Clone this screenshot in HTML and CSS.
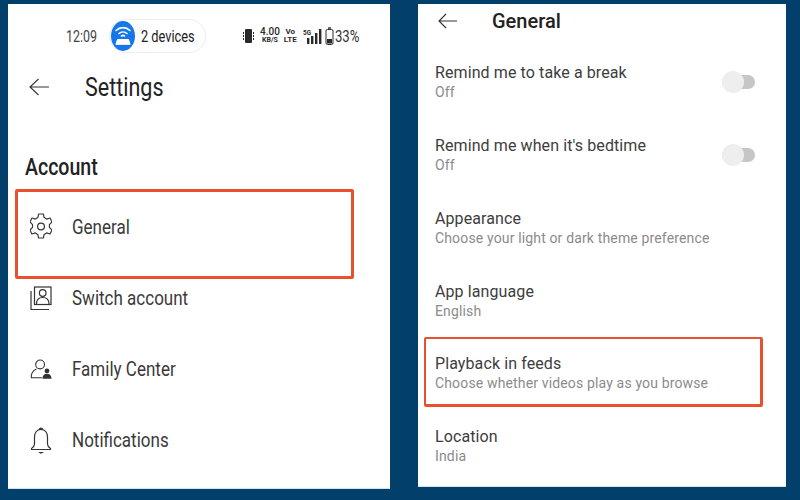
FILE: index.html
```html
<!DOCTYPE html>
<html lang="en">
<head>
    <meta charset="UTF-8">
    <title>YouTube playback settings</title>
    <link rel="stylesheet" href="styles.css">
</head>
<body>
    <div class="panel panel-left">
        <div class="status">
            <span class="clock">12:09</span>
            <div class="pill">
                <span class="pill-icon">
                    <svg width="24" height="30" viewBox="0 0 24 30" fill="none" stroke="#fff" stroke-linecap="round">
                        <path d="M5 9.5a10 10 0 0 1 14 0" stroke-width="1.6"/>
                        <path d="M8 12.5a6 6 0 0 1 8 0" stroke-width="1.6"/>
                        <path d="M10.5 15a2.5 2.5 0 0 1 3 0" stroke-width="1.6"/>
                        <path d="M5 23l1.5-4.5h11L19 23z" fill="#fff" stroke-width="1"/>
                    </svg>
                </span>
                <span class="pill-text">2 devices</span>
            </div>
            <div class="indicators">
                <svg width="13" height="16" viewBox="0 0 13 16" fill="#2a2a2a">
                    <rect x="3" y="1" width="7" height="14" rx="1"/>
                    <path d="M1.5 4v8M11.5 4v8" stroke="#2a2a2a" stroke-dasharray="2 1"/>
                </svg>
                <span class="speed"><b>4.00</b><small>KB/S</small></span>
                <span class="volte"><small>Vo</small><small>LTE</small></span>
                <span class="net">
                    <small>5G</small>
                    <svg width="16" height="15" viewBox="0 0 16 15" fill="#2a2a2a">
                        <rect x="0" y="9" width="2.4" height="6"/>
                        <rect x="4" y="7" width="2.4" height="8"/>
                        <rect x="8" y="4" width="2.4" height="11"/>
                        <rect x="12" y="0" width="2.4" height="15"/>
                    </svg>
                </span>
                <svg width="9" height="18" viewBox="0 0 9 18" fill="none" stroke="#2a2a2a">
                    <rect x="1" y="2.5" width="7" height="15" rx="1.5"/>
                    <path d="M3 1h3" stroke-width="1.4"/>
                    <rect x="2" y="12" width="5" height="4.5" fill="#2a2a2a" stroke="none"/>
                </svg>
                <span class="battery">33%</span>
            </div>
        </div>

        <div class="header">
            <svg class="back" width="20" height="18" viewBox="0 0 20 18" fill="none" stroke="#333" stroke-width="1.1">
                <path d="M20 9H1M9.5 1L1 9l8.5 8"/>
            </svg>
            <h1 class="wide">Settings</h1>
        </div>

        <h2 class="section">Account</h2>

        <div class="menu-item marked">
            <svg width="22" height="27" viewBox="0 0 22 27" fill="none" stroke="#333" stroke-width="1.2" stroke-linejoin="round">
                <path d="M8.5 1h5l.8 3.6 2.6 1.500 3.600-1.100 2 4-2.700 2.600v2.800l2.700 2.600-2 4-3.600-1.100-2.600 1.500-.8 3.600h-5l-.8-3.600-2.600-1.500-3.600 1.100-2-4 2.700-2.600v-2.800L-.4 9l2-4 3.600 1.100 2.600-1.500z" transform="translate(.4 0) scale(.96 1)"/>
                <circle cx="11" cy="13.500" r="3.400"/>
            </svg>
            <span>General</span>
        </div>

        <div class="menu-item">
            <svg width="22" height="25" viewBox="0 0 22 25" fill="none" stroke="#333" stroke-width="1.2">
                <rect x="4.500" y="1" width="16.500" height="17.500"/>
                <path d="M1 5v18.500h18"/>
                <circle cx="12.700" cy="7" r="3.300"/>
                <path d="M6.500 18c0-5 3-6.500 6.200-6.500S19 13 19 18"/>
            </svg>
            <span>Switch account</span>
        </div>

        <div class="menu-item">
            <svg width="24" height="23" viewBox="0 0 24 23" fill="none" stroke="#333" stroke-width="1.2">
                <circle cx="11" cy="6" r="4.800"/>
                <path d="M13 20.500H1.500c-1-4 2-8 5.500-9.500"/>
                <circle cx="18.500" cy="13" r="2.600" fill="#333" stroke="none"/>
                <path d="M13.500 21.500c0-3.500 2-5.500 5-5.500s5 2 5 5.500z" fill="#333" stroke="none"/>
            </svg>
            <span>Family Center</span>
        </div>

        <div class="menu-item">
            <svg width="22" height="27" viewBox="0 0 22 27" fill="none" stroke="#333" stroke-width="1.2">
                <path d="M11 2.500c-4.500 0-6.500 3.500-6.500 7.500v7c0 2-1.500 3.500-3 4.500v1h19v-1c-1.500-1-3-2.500-3-4.500v-7c0-4-2-7.500-6.500-7.500z"/>
                <path d="M9.500 2.500a1.500 1.500 0 0 1 3 0z" fill="#333"/>
                <path d="M8 25h6l-3 1.800z" fill="#333" stroke="none"/>
            </svg>
            <span>Notifications</span>
        </div>
    </div>

    <div class="panel panel-right">
        <div class="header-small">
            <svg class="back" width="19" height="16" viewBox="0 0 19 16" fill="none" stroke="#333" stroke-width="1.1">
                <path d="M19 8H1M8 1L1 8l7 7"/>
            </svg>
            <h1>General</h1>
        </div>

        <div class="setting has-toggle">
            <div>
                <p class="name">Remind me to take a break</p>
                <p class="desc">Off</p>
            </div>
            <span class="toggle"></span>
        </div>
        <div class="setting has-toggle">
            <div>
                <p class="name">Remind me when it's bedtime</p>
                <p class="desc">Off</p>
            </div>
            <span class="toggle"></span>
        </div>
        <div class="setting">
            <p class="name">Appearance</p>
            <p class="desc">Choose your light or dark theme preference</p>
        </div>
        <div class="setting">
            <p class="name">App language</p>
            <p class="desc">English</p>
        </div>
        <div class="setting marked">
            <p class="name">Playback in feeds</p>
            <p class="desc">Choose whether videos play as you browse</p>
        </div>
        <div class="setting">
            <p class="name">Location</p>
            <p class="desc">India</p>
        </div>
    </div>
</body>
</html>
```

FILE: styles.css
```css
* {
    box-sizing: border-box;
}
body {
    margin: 0;
    width: 800px;
    height: 500px;
    overflow: hidden;
    background-color: #023f6b;
    font-family: Roboto, "Liberation Sans", sans-serif;
    color: #333;
    display: flex;
    align-items: flex-start;
    padding: 4px 0 0 8px;
}
p, h1, h2 {
    margin: 0;
}
.panel {
    background-color: #fff;
    border: 1px solid #cfe3f0;
    border-width: 0 0 1px 0;
}
.panel-left {
    width: 382px;
    height: 485px;
}
.panel-right {
    width: 368px;
    height: 483px;
    margin-left: 28px;
}

/* status bar */
.status {
    height: 64px;
    display: flex;
    align-items: center;
    padding-left: 58px;
}
.clock {
    font-size: 16px;
    width: 43px;
    color: #444;
    transform: scaleX(.78);
    transform-origin: left;
}
.pill {
    width: 97px;
    height: 34px;
    border: 1px solid #ececf2;
    border-radius: 17px;
    display: flex;
    align-items: center;
    font-size: 16px;
    color: #222;
}
.pill-icon {
    width: 24px;
    height: 30px;
    margin-left: 1px;
    background-color: #1877e8;
    border-radius: 50%;
    display: flex;
}
.pill-text {
    margin-left: 6px;
    transform: scaleX(.8);
    transform-origin: left;
    white-space: nowrap;
}
.indicators {
    margin-left: 36px;
    display: flex;
    align-items: center;
    color: #2a2a2a;
}
.speed, .volte {
    display: flex;
    flex-direction: column;
    align-items: center;
    line-height: 8px;
    margin-left: 5px;
}
.speed b {
    font-size: 10px;
    font-weight: 500;
}
.speed small {
    font-size: 7px;
    font-weight: 700;
}
.volte small, .net small {
    font-size: 8px;
    font-weight: 700;
}
.volte {
    margin-left: 4px;
}
.net {
    display: flex;
    margin-left: 6px;
    margin-right: 2px;
}
.net small {
    line-height: 8px;
    margin-right: -9px;
    width: 13px;
    transform: scaleX(.8);
    transform-origin: left;
}
.battery {
    font-size: 16px;
    margin-left: 1px;
    color: #333;
    transform: scaleX(.82);
    transform-origin: left;
}

/* left list */
.header {
    height: 38px;
    display: flex;
    align-items: center;
    padding-left: 21px;
}
.header h1 {
    margin-left: 36px;
}
.wide {
    font-size: 25px;
    font-weight: 400;
    color: #222;
    transform: scaleX(.86);
    transform-origin: left;
}
.section {
    margin-top: 43px;
    height: 38px;
    line-height: 38px;
    padding-left: 20px;
    font-size: 23px;
    font-weight: 500;
    color: #222;
    transform: scaleX(.85);
    transform-origin: left;
}
.menu-item {
    height: 38px;
    margin-top: 33px;
    display: flex;
    align-items: center;
    padding-left: 22px;
    font-size: 21px;
    color: #3a3a3a;
}
.menu-item svg {
    width: 22px;
    flex: none;
}
.menu-item span {
    margin-left: 20px;
    transform: scaleX(.81);
    transform-origin: left;
    white-space: nowrap;
}
.menu-item.marked {
    margin: 2px 0 0 7px;
    width: 339px;
    height: 90px;
    padding: 0 0 15px 12px;
    border: 3px solid #e8502e;
    border-radius: 2px;
}
.menu-item.marked + .menu-item {
    margin-top: 0;
}

/* right list */
.header-small {
    height: 37px;
    padding: 0 0 4px 20px;
    display: flex;
    align-items: center;
}
.header-small h1 {
    margin-left: 35px;
    font-size: 20px;
    font-weight: 500;
    color: #222;
}
.setting {
    height: 73px;
    padding: 21px 0 0 17px;
}
.setting.has-toggle {
    display: flex;
    justify-content: space-between;
    padding-right: 31px;
}
.name {
    font-size: 16px;
    line-height: 21px;
    color: #3d3d3d;
    letter-spacing: .1px;
}
.desc {
    font-size: 14px;
    line-height: 19px;
    color: #8b8b8b;
    letter-spacing: .15px;
}
.toggle {
    position: relative;
    width: 33px;
    height: 14px;
    margin-top: 13px;
    background-color: #c6c6c6;
    border-radius: 7px;
}
.toggle::before {
    content: "";
    position: absolute;
    left: 0;
    top: -4px;
    width: 22px;
    height: 22px;
    border-radius: 50%;
    background-color: #eeeeee;
}
.setting.marked {
    width: 339px;
    height: 70px;
    margin: 4px 0 0 6px;
    padding: 14px 0 0 9px;
    border: 3px solid #e8502e;
    border-width: 2px 3px 3px 2px;
    border-radius: 2px;
}
.setting.marked + .setting {
    padding-top: 19px;
}
```
